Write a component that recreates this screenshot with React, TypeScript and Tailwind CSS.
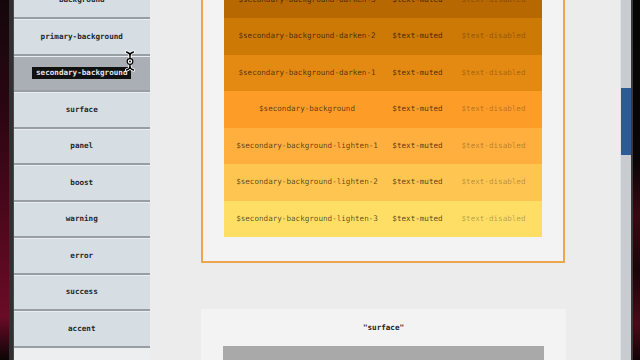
import React from "react";

const sideItems = [
  "background",
  "primary-background",
  "secondary-background",
  "surface",
  "panel",
  "boost",
  "warning",
  "error",
  "success",
  "accent",
];

const rows = [
  { name: "$secondary-background-darken-3", bg: "#b86800" },
  { name: "$secondary-background-darken-2", bg: "#cc7906" },
  { name: "$secondary-background-darken-1", bg: "#e48a12" },
  { name: "$secondary-background", bg: "#fd9d28" },
  { name: "$secondary-background-lighten-1", bg: "#feaf3e" },
  { name: "$secondary-background-lighten-2", bg: "#fec650" },
  { name: "$secondary-background-lighten-3", bg: "#fede65" },
];

export default function App() {
  return (
    <div
      className="w-[640px] h-[360px] flex overflow-hidden bg-black"
      style={{ fontFamily: '"DejaVu Sans Mono", "Liberation Mono", monospace' }}
    >
      {/* desktop left */}
      <div className="w-[9px] h-full shrink-0 bg-[linear-gradient(to_bottom,#14070c_0%,#2a0612_30%,#52081d_65%,#6a0c26_88%,#0c0406_100%)]" />
      <div className="w-[4.5px] h-full shrink-0 bg-[#303030] border-r border-[#4a4a4a]" />

      {/* sidebar */}
      <aside className="relative w-[136.5px] h-full shrink-0 bg-[#eceef0] flex flex-col">
        <div className="-mt-[17.5px] flex flex-col">
          {sideItems.map((s) => {
            const sel = s === "secondary-background";
            return (
              <div
                key={s}
                className={`h-[36.5px] shrink-0 flex items-center justify-center border-t border-b-2 border-t-[#e9edf0] border-b-[#989ea4] ${
                  sel ? "bg-[#a9afb5]" : "bg-[#d6dde3]"
                }`}
              >
                {sel ? (
                  <span className="bg-[#111] text-[#e4e6e8] px-[4px] text-[7.6px] leading-[12px] font-bold">
                    {s}
                  </span>
                ) : (
                  <span className="text-[#23272c] text-[7.6px] leading-[10px] font-bold">{s}</span>
                )}
              </div>
            );
          })}
        </div>
        {/* I-beam cursor */}
        <svg className="absolute left-[110px] top-[50px]" width="12" height="22" viewBox="0 0 12 22">
          <g stroke="#fff" strokeWidth="3.2" fill="none" strokeLinecap="round">
            <path d="M2.5 2 Q6 3 6 5.5 Q6 3 9.5 2" />
            <path d="M6 5.5 V17" />
            <path d="M2.5 20 Q6 19 6 16.5 Q6 19 9.5 20" />
          </g>
          <g stroke="#000" strokeWidth="1.4" fill="none" strokeLinecap="round">
            <path d="M2.5 2 Q6 3 6 5.5 Q6 3 9.5 2" />
            <path d="M6 5.5 V17" />
            <path d="M2.5 20 Q6 19 6 16.5 Q6 19 9.5 20" />
          </g>
          <circle cx="6" cy="11.5" r="2.8" fill="#fff" stroke="#000" strokeWidth="1.2" />
          <circle cx="6" cy="11.5" r="0.9" fill="#000" />
        </svg>
      </aside>

      {/* main */}
      <main className="w-[470px] h-full shrink-0 bg-[#ececec] overflow-hidden">
        <div className="ml-[51px] -mt-[43px] flex flex-col">
          <div className="w-[364px] border-2 border-[#eba64e] bg-[#f3f3f3] pt-[22.5px] pb-[23.5px] pl-[21px] pr-[21px]">
            <div className="flex flex-col">
              {rows.map((r) => (
                <div
                  key={r.name}
                  className="h-[36.5px] grid grid-cols-[166px_55px_1fr] items-center text-center text-[7.6px] leading-[10px]"
                  style={{ backgroundColor: r.bg }}
                >
                  <span className="text-black/65">{r.name}</span>
                  <span className="text-black/70">$text-muted</span>
                  <span className="text-black/30">$text-disabled</span>
                </div>
              ))}
            </div>
          </div>

          <div className="mt-[46px] w-[365px] bg-[#f3f3f3] pt-[14px] px-[22px] flex flex-col">
            <div className="text-center text-[7.6px] leading-[10px] font-bold text-[#222]">"surface"</div>
            <div className="mt-[13px] h-[40px] bg-[#a9a9a9]" />
          </div>
        </div>
      </main>

      {/* scrollbar */}
      <div className="w-[11px] h-full shrink-0 bg-[#c8ccd1] border-l border-[#dfe2e5] flex flex-col">
        <div className="h-[88px]" />
        <div className="h-[67px] bg-[#2c5a94]" />
      </div>
      <div className="w-[2px] h-full shrink-0 bg-[#3a3a3a]" />
      <div className="flex-1 h-full bg-[linear-gradient(to_bottom,#050505_0%,#0a0506_45%,#3a0812_60%,#1a0408_75%,#4a0a18_90%,#120306_100%)]" />
    </div>
  );
}
